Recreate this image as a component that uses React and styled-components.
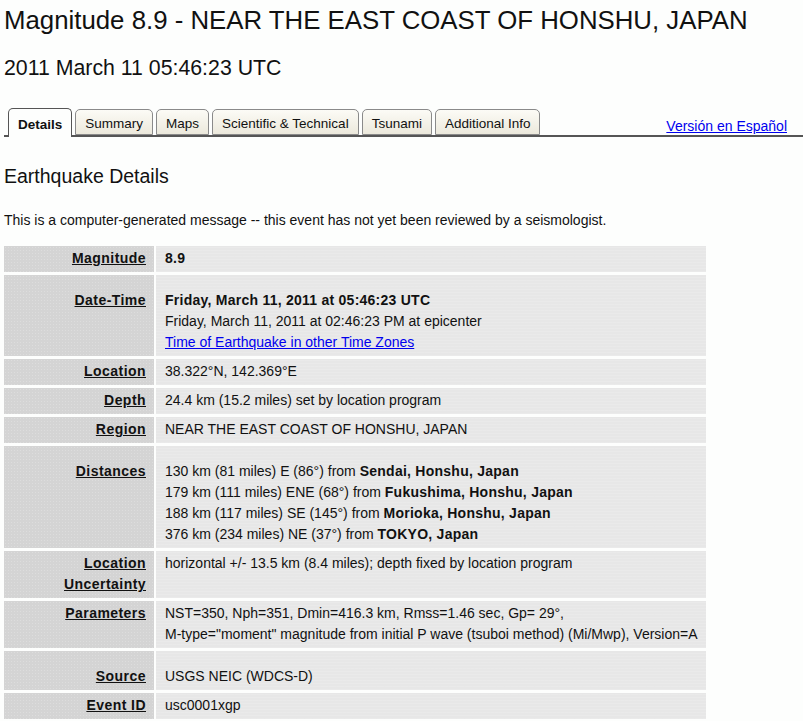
import React from 'react'
import styled, { createGlobalStyle } from 'styled-components'

const GlobalStyle = createGlobalStyle`
    body{
        margin:0;
        background:#fdfefd;
        font-family:"Liberation Sans", Arial, sans-serif;
        color:#111;
    }
`

const Page = styled.div`
    padding-left:4px;
`

const Title = styled.h1`
    font-size:25.8px;
    font-weight:normal;
    margin:0;
    padding-top:5px;
    line-height:30px;
`

const SubTitle = styled.h2`
    font-size:21.3px;
    font-weight:normal;
    margin:0;
    padding-top:21px;
    line-height:24px;
`

const TabBar = styled.div`
    display:flex;
    align-items:flex-end;
    margin-top:28px;
    border-bottom:2px solid #555;
    height:27px;
    padding-left:4px;
`

const Tab = styled.div`
    box-sizing:border-box;
    height:${p => p.active ? '29px' : '26px'};
    margin-right:3px;
    margin-bottom:${p => p.active ? '-2px' : '0'};
    padding:${p => p.active ? '8px 9px 0' : '6px 9px 0'};
    font-size:13.5px;
    font-weight:${p => p.active ? 'bold' : 'normal'};
    border:1px solid ${p => p.active ? '#555' : '#8a8a8a'};
    border-bottom:${p => p.active ? 'none' : '1px solid #8a8a8a'};
    border-radius:5px 5px 0 0;
    background:${p => p.active ? '#fdfefd' : 'linear-gradient(#fcfbf6, #ece9dc)'};
`

const LangLink = styled.a`
    margin-left:auto;
    margin-right:16px;
    margin-bottom:1px;
    font-size:14px;
    color:#0000ee;
    text-decoration:underline;
`

const Heading = styled.h3`
    font-size:19.5px;
    font-weight:normal;
    margin:0;
    padding-top:27px;
    line-height:24px;
`

const Note = styled.p`
    font-size:14px;
    margin:0;
    padding-top:24px;
    line-height:16px;
`

const Table = styled.div`
    display:grid;
    grid-template-columns:150px 550px;
    gap:3px 2px;
    margin-top:18px;
    font-size:14px;
    line-height:21px;

    b{
        letter-spacing:0.25px;
    }
`

const Label = styled.div`
    text-align:right;
    font-weight:bold;
    letter-spacing:0.45px;
    padding:${p => p.spaced ? '15px' : '2px'} 8px 3px 0;
    background-color:#d4d4d4;
    background-image:radial-gradient(rgba(255,255,255,0.22) 0.6px, transparent 0.9px);
    background-size:3px 3px;
    text-decoration:underline;
`

const Value = styled.div`
    padding:${p => p.spaced ? '15px' : '2px'} 8px 3px 9px;
    background-color:#e7e7e7;
    background-image:repeating-linear-gradient(0deg, rgba(255,255,255,0.12) 0 1px, transparent 1px 3px);
`

const Link = styled.a`
    color:#0000ee;
    text-decoration:underline;
`

const tabs = ['Details', 'Summary', 'Maps', 'Scientific & Technical', 'Tsunami', 'Additional Info']

const rows = [
    { label: 'Magnitude', value: <b>8.9</b> },
    {
        label: 'Date-Time', spaced: true, value: (
            <>
                <b>Friday, March 11, 2011 at 05:46:23 UTC</b><br />
                Friday, March 11, 2011 at 02:46:23 PM at epicenter<br />
                <Link href="#">Time of Earthquake in other Time Zones</Link>
            </>
        )
    },
    { label: 'Location', value: '38.322°N, 142.369°E' },
    { label: 'Depth', value: '24.4 km (15.2 miles) set by location program' },
    { label: 'Region', value: 'NEAR THE EAST COAST OF HONSHU, JAPAN' },
    {
        label: 'Distances', spaced: true, value: (
            <>
                130 km (81 miles) E (86°) from <b>Sendai, Honshu, Japan</b><br />
                179 km (111 miles) ENE (68°) from <b>Fukushima, Honshu, Japan</b><br />
                188 km (117 miles) SE (145°) from <b>Morioka, Honshu, Japan</b><br />
                376 km (234 miles) NE (37°) from <b>TOKYO, Japan</b>
            </>
        )
    },
    { label: <>Location<br />Uncertainty</>, value: 'horizontal +/- 13.5 km (8.4 miles); depth fixed by location program' },
    {
        label: 'Parameters', value: (
            <>
                NST=350, Nph=351, Dmin=416.3 km, Rmss=1.46 sec, Gp= 29°,<br />
                M-type="moment" magnitude from initial P wave (tsuboi method) (Mi/Mwp), Version=A
            </>
        )
    },
    { label: 'Source', spaced: true, value: 'USGS NEIC (WDCS-D)' },
    { label: 'Event ID', value: 'usc0001xgp' },
]

function App () {
    return (
        <Page>
            <GlobalStyle />
            <Title>Magnitude 8.9 - NEAR THE EAST COAST OF HONSHU, JAPAN</Title>
            <SubTitle>2011 March 11 05:46:23 UTC</SubTitle>

            <TabBar>
                {tabs.map((t, i) => (
                    <Tab key={t} active={i === 0}>{t}</Tab>
                ))}
                <LangLink href="#">Versión en Español</LangLink>
            </TabBar>

            <Heading>Earthquake Details</Heading>
            <Note>This is a computer-generated message -- this event has not yet been reviewed by a seismologist.</Note>

            <Table>
                {rows.map((r, i) => (
                    <React.Fragment key={i}>
                        <Label spaced={r.spaced}>{r.label}</Label>
                        <Value spaced={r.spaced}>{r.value}</Value>
                    </React.Fragment>
                ))}
            </Table>
        </Page>
    )
}

export default App
